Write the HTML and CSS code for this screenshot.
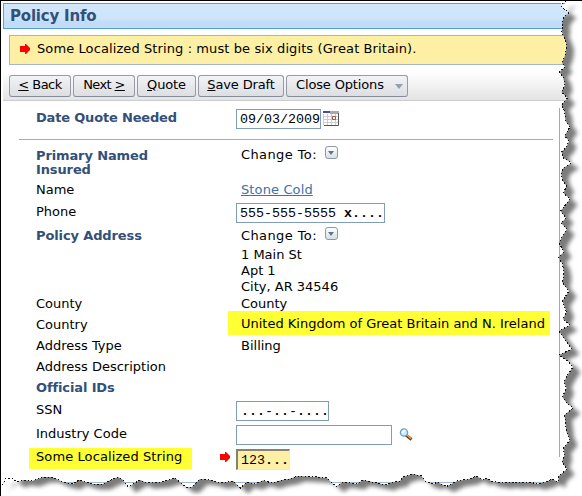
FILE: index.html
```html
<!DOCTYPE html>
<html lang="en">
<head>
<meta charset="utf-8">
<title>Policy Info</title>
<link rel="stylesheet" href="styles.css">
</head>
<body>
<main class="screen">
  <h1 class="title">Policy Info</h1>
  <div class="alert"><svg class="arrow" viewBox="0 0 10 10"><path d="M0 2h5V0h1l4 4v2l-4 4H5V8H0z"/></svg><span class="alert-text">Some Localized String : must be six digits (Great Britain).</span></div>
  <div class="toolbar">
    <button class="btn back"><span><u>&lt;</u> Back</span></button>
    <button class="btn next"><span>Next <u>&gt;</u></span></button>
    <button class="btn quote"><span><u>Q</u>uote</span></button>
    <button class="btn save"><span><u>S</u>ave Draft</span></button>
    <button class="btn close"><span>Close Options</span><i class="caret"></i></button>
  </div>
  <section class="panel">
    <div class="row date"><b class="label">Date Quote Needed</b><span class="field w-date">09/03/2009</span>
      <svg class="calendar" viewBox="0 0 16 15"><path fill="#fff" d="M0 0h16v15H0z"/><path stroke="#ccc" d="M.5 3v11M4.500 3v11M8.500 3v11M12.500 3v11M0 5.500h15M0 8.500h15M0 11.500h15"/><path fill="#aaa" d="M7 0h9v3H7z"/><path fill="#4848b0" d="M0 0h7v2H0z"/><path fill="#fff" stroke="#b34a45" d="M9.500 5.500h3v3h-3z"/><path fill="none" stroke="#555" d="M15.500 2v12.500H1"/></svg>
    </div>
    <div class="row primary"><b class="label">Primary Named<br>Insured</b><span class="value change">Change To:</span><i class="drop"></i></div>
    <div class="row name"><span class="label">Name</span><span class="value"><a>Stone Cold</a></span></div>
    <div class="row phone"><span class="label">Phone</span><span class="field w-phone">555-555-5555 <b>x....</b></span></div>
    <div class="row policy"><b class="label">Policy Address</b><span class="value change">Change To:</span><i class="drop"></i></div>
    <div class="row address"><span class="label"></span><span class="value">1 Main St<br>Apt 1<br>City, AR 34546</span></div>
    <div class="row county"><span class="label">County</span><span class="value">County</span></div>
    <div class="row country"><span class="label">Country</span><span class="value mark-country">United Kingdom of Great Britain and N. Ireland</span></div>
    <div class="row type"><span class="label">Address Type</span><span class="value">Billing</span></div>
    <div class="row desc"><span class="label">Address Description</span></div>
    <div class="row official"><b class="label">Official IDs</b></div>
    <div class="row entry"><span class="label">SSN</span><span class="field w-ssn"><b>...</b>-<b>..</b>-<b>....</b></span></div>
    <div class="row entry"><span class="label">Industry Code</span><span class="field w-industry"></span>
      <svg class="search" viewBox="0 0 14 14"><path d="M7 7l5.500 4.500" stroke="#6d3d22" stroke-width="3"/><path d="M8 7l4 3.500" stroke="#efa45e" stroke-width="1.500"/><circle cx="5" cy="4.500" r="3.600" fill="#c5effc" stroke="#6d9fc7" stroke-width="1.300"/><path d="M3 5l3-3" stroke="#fff" stroke-width="1.500"/></svg>
    </div>
    <div class="row entry"><span class="label"><span class="mark-string">Some Localized String</span></span><svg class="arrow required" viewBox="0 0 10 10"><path d="M0 2h5V0h1l4 4v2l-4 4H5V8H0z"/></svg><span class="field w-string">123<b>...</b></span></div>
  </section>
  <svg class="torn" viewBox="0 0 582 496">
    <defs>
      <path id="edge" d="M569 0L562.5 3 561 6 564 9 569 12.500 564 17 562 22.500 563 27 561.500 31 564 37 566.500 44 566 51 564.500 57 562 62.500 565 67 559.500 72 563 77 565 85 561.500 92 567.500 98 561.500 105 564.500 111 565.500 121 570 127 564.500 136 569 141 566.500 147 561.500 152 563.500 158 571.500 163 563.500 168 561 173 563 181 566.500 186 563.500 193 570 199 564 207 560.500 211 566 218 561 223 567 229 562 237 559 243 564 252 558.500 257 562.500 264 564 273 562.500 283 569 291 562.500 301 566.500 312 563 319 570 325 559 331 566.500 342 572 349 559 355 568 361 573 367 567.500 375 564 382 566.500 388 562.500 397 566.500 403 573 408 564.500 415 565.500 423 566.500 432 570 440 563.500 448 564.500 455 562 462 567 469 559 476 558 482 552 479 546 482 537 484 530 482 527 483 520 482 515 483 510 482 503 483 497 482 492 481.500 486 478 483 480 476.500 476 470 479 457 481 446.500 486.500 437 482 434 484 425 481 421.500 476 413 474 403 477 400 481 390 483 387 485 377 483 363 480 357 484 343 482 336 486.500 331 482 327 478 317 477 298 476 289 479 282 480 272 483 263 480.500 255 484 247 482 240.500 488 233 481 220 483 210 480 200 479 192 487 186 487 175 478 162 482 147 483 140 480 128 487 123 480 118 477 111 480 103 484 92 484 79 480 73 484 63 482 52 477 43 477 32 481 23 480 17 482 12 478 6 478 3 484 0 486"/>
      <mask id="outside"><path fill="#fff" d="M0 0h582v496H0z"/><use href="#edge" class="cut"/><path d="M0 0H561V30H556V474H16L12 478H6L3 484 0 486z"/></mask>
      <filter id="soft" x="-10%" y="-10%" width="120%" height="120%"><feGaussianBlur stdDeviation="1.900"/></filter>
    </defs>
    <g mask="url(#outside)">
      <path fill="#fff" d="M0 0h582v496H0z"/>
      <g filter="url(#soft)" fill="#7c7c7c"><g transform="translate(7.5 5.5)"><use href="#edge"/><path d="M8 8h548v464H8z"/></g></g>
    </g>
    <use href="#edge" class="dots"/>
  </svg>
</main>
</body>
</html>
```

FILE: styles.css
```css
* { box-sizing: border-box; }
body { margin: 0; background: #fff; }
.screen { position: relative; width: 582px; height: 496px; overflow: hidden; border-top: 1px solid #000; border-left: 1px solid #000; padding: 2px 0 0 2px; font: 13px/16px "DejaVu Sans", sans-serif; color: #000; }
.title { margin: 0; height: 26px; padding-left: 6px; border: 1px solid #5f9cd8; border-bottom-color: #559ddd; background: linear-gradient(#d3e7fb 0, #cde4fa 60%, #c0dcf7 75%, #c3ddf6); font: bold 15px/24px "DejaVu Sans", sans-serif; letter-spacing: -.2px; color: #335078; }
.alert { display: flex; align-items: center; height: 30px; margin: 6px 0 0 6px; padding: 0 0 3px 10px; border: 1px solid #a4b5cb; background: #fdf0a4; }
.arrow { width: 10px; height: 10px; fill: #f00; flex: none; }
.alert-text { margin-left: 7px; white-space: nowrap; letter-spacing: .1px; }
.toolbar { display: flex; gap: 2px; height: 36px; padding: 10px 0 0 6px; border-bottom: 1px solid #ccc; background: linear-gradient(#fff 20%, #e4e4e4); }
.btn { display: flex; align-items: center; justify-content: center; height: 22px; padding: 0 0 3px; border: 1px solid #969ba8; border-bottom-color: #858b98; border-radius: 3px; background: linear-gradient(#f2f3f6, #dcdee1); font: inherit; letter-spacing: -.15px; color: #000; white-space: nowrap; }
.back, .next { width: 62px; }
.next { letter-spacing: -.6px; }
.back { letter-spacing: -.5px; }
.quote { width: 59px; }
.save { width: 86px; }
.close { width: 122px; justify-content: flex-start; padding-left: 9px; }
.caret { margin: 4px 0 0 11px; border: 4.5px solid transparent; border-top: 5px solid #91a0ae; border-bottom: 0; }
.panel { height: 382px; padding: 5px 0 0 33px; border-bottom: 1px solid #a2b7cb; width: 557px; background: linear-gradient(#8fb0cb, #8fb0cb) right 7px / 1px 349px no-repeat; }
.row { display: flex; align-items: center; height: 21px; white-space: nowrap; }
.label { width: 200px; flex: none; }
b.label { color: #335078; letter-spacing: -.12px; }
.value { margin-left: 5px; }
.change { letter-spacing: .4px; }
.date { height: 34px; padding-bottom: 8px; margin: 0 7px 0 -17px; padding-left: 17px; border-bottom: 1px solid #8db2d3; }
.date .label { letter-spacing: -.18px; padding-bottom: 1px; }
.primary { height: 36px; margin-top: 3px; align-items: flex-start; line-height: 14px; padding-top: 5px; }
.primary .label { margin-top: 1px; }
.name { height: 22px; }
.phone { height: 24px; }
.phone .label { padding-bottom: 2px; }
.policy { height: 22px; }
.address { height: 48px; }
.county { height: 17px; }
.country { height: 23px; align-items: flex-start; }
.country .label { padding-top: 5px; }
.type { height: 21px; }
.official { height: 22px; padding-bottom: 1px; }
.entry { height: 24px; }
.entry .label { padding-bottom: 2px; }
.field { display: block; flex: none; height: 20px; padding: 1px 3px 0; border: 1px solid #7f9db9; background: #fff; font: 13.33px/18px "Liberation Mono", monospace; overflow: hidden; }
.w-date { width: 85px; }
.w-phone { width: 149px; }
.w-ssn { width: 93px; padding-left: 4px; }
.w-industry { width: 156px; }
.w-string { width: 54px; height: 21px; padding-left: 3px; border: 1px solid #ece9d8; border-top: 2px solid #85826f; border-left: 2px solid #85826f; background: #fdf0a4; }
.required { margin: 0 6px 0 -16px; }
.entry .required { position: relative; top: -2px; }
.calendar { width: 16px; height: 15px; margin-left: 2px; }
.search { width: 14px; height: 14px; margin: 0 0 0 7px; fill: none; }
.drop { display: block; position: relative; width: 13px; height: 13px; margin-left: 8px; border: 1px solid #8d98a5; border-radius: 3px; background: linear-gradient(#fff, #d9dfe5); }
.primary .drop { margin-top: -2px; }
.policy .drop { margin-top: -6px; }
.drop::after { content: ""; position: absolute; left: 2px; top: 4px; border: 3.5px solid transparent; border-top: 4px solid #5a7793; border-bottom: 0; }
a { color: #3c72a8; text-decoration: underline; letter-spacing: .12px; }
.mark-country { margin: -1px 0 0 -8px; width: 322px; height: 24px; padding: 5px 0 0 13px; background: #ff3; }
.mark-string { display: block; width: 163px; height: 21px; margin-left: -7px; padding: 1px 0 0 7px; background: #ff3; letter-spacing: .1px; }
.torn { position: absolute; left: -1px; top: -1px; width: 582px; height: 496px; pointer-events: none; }
.cut { fill: #000; }
.dots { fill: none; stroke: #111; stroke-width: 1; stroke-dasharray: 1.5 2; shape-rendering: crispEdges; }
```
